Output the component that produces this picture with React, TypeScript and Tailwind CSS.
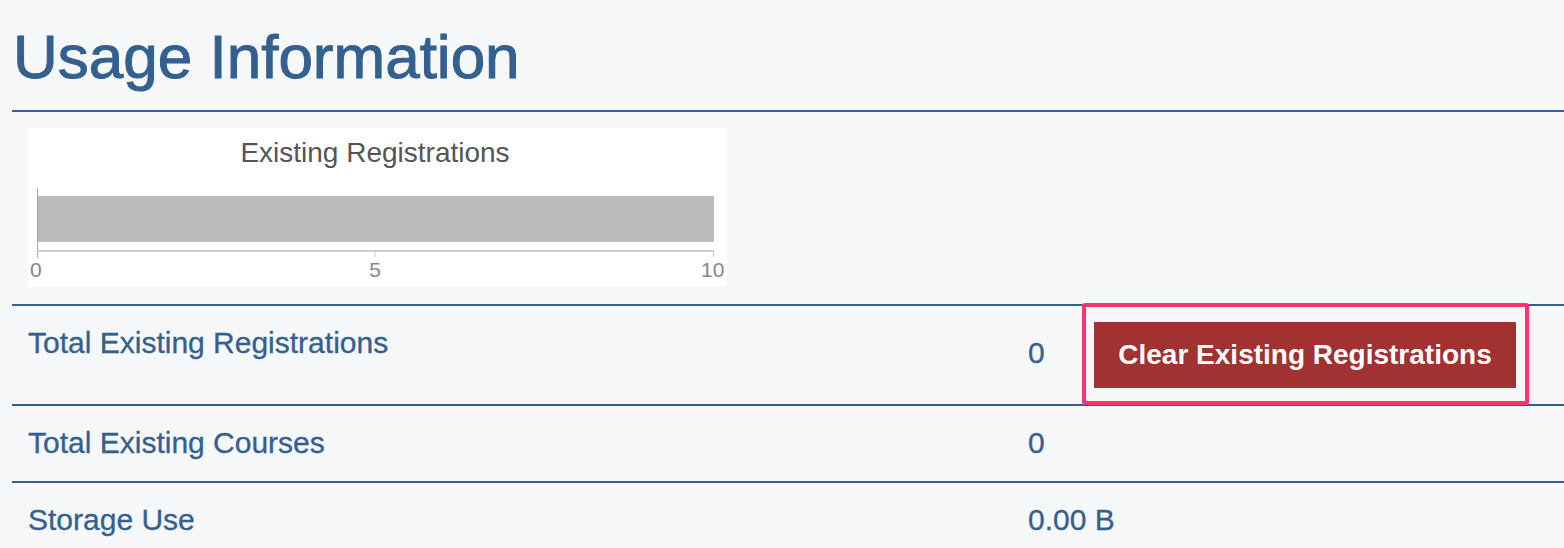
import React from "react";

const rows = [
  { label: "Total Existing Registrations", value: "0", action: true },
  { label: "Total Existing Courses", value: "0" },
  { label: "Storage Use", value: "0.00 B" },
];

function RegistrationsChart() {
  return (
    <svg width="699" height="159" viewBox="0 0 699 159" className="block">
      <rect width="699" height="159" fill="#ffffff" />
      <text
        x="347"
        y="34"
        textAnchor="middle"
        fontSize="28"
        fill="#555555"
        fontFamily="'Liberation Sans', Arial, sans-serif"
      >
        Existing Registrations
      </text>
      <rect x="9" y="68" width="677" height="46" fill="#bbbbbb" />
      <line x1="9.5" y1="60" x2="9.5" y2="130" stroke="#a8a8a8" strokeWidth="1" />
      <line x1="9" y1="123" x2="686" y2="123" stroke="#cccccc" strokeWidth="2" />
      <line x1="347" y1="123" x2="347" y2="129" stroke="#cccccc" strokeWidth="1" />
      <line x1="685.5" y1="123" x2="685.5" y2="129" stroke="#cccccc" strokeWidth="1" />
      <g fontSize="21" fill="#888888" fontFamily="'Liberation Sans', Arial, sans-serif">
        <text x="2" y="149">0</text>
        <text x="347" y="149" textAnchor="middle">5</text>
        <text x="673" y="149">10</text>
      </g>
    </svg>
  );
}

export default function App() {
  return (
    <div className="min-h-[548px] bg-[#f5f7f9] pl-3 font-['Liberation_Sans',Arial,sans-serif] text-[#33608f]">
      <h1 className="pt-[26px] pl-[1px] text-[62px] leading-none font-normal [-webkit-text-stroke:1px_#33608f]">
        Usage Information
      </h1>
      <div className="mt-[22px] border-t-2 border-[#33608f] pt-[16px] pl-4 pb-[17px]">
        <RegistrationsChart />
      </div>
      {rows.map((row) => (
        <div
          key={row.label}
          className={`grid grid-cols-[1000px_66px_auto] border-t-2 border-[#33608f] pl-4 text-[30px] leading-[34px] [-webkit-text-stroke:0.3px_#33608f] ${
            row.action ? "h-[100px]" : "h-[77px]"
          }`}
        >
          <div className="pt-5">{row.label}</div>
          <div className={`whitespace-nowrap ${row.action ? "self-center pb-[4px]" : "pt-5"}`}>{row.value}</div>
          {row.action && (
            <div className="self-center">
              <div className="relative w-[422px]">
                <button className="h-[66px] w-[422px] bg-[#a23131] text-[28px] font-bold text-white [-webkit-text-stroke:0]">
                  Clear Existing Registrations
                </button>
                <span className="pointer-events-none absolute -top-[19px] -bottom-[17px] -left-3 -right-[13px] rounded-[3px] border-[4px] border-[#ff3370]" />
              </div>
            </div>
          )}
        </div>
      ))}
    </div>
  );
}
